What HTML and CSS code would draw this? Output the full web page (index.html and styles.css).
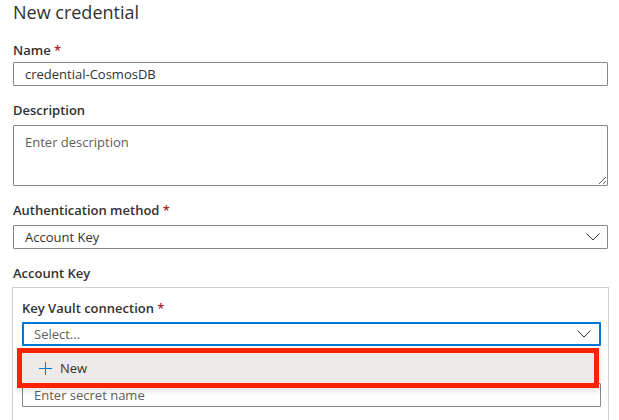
FILE: index.html
```html
<!DOCTYPE html>
<html lang="en">
<head>
<meta charset="utf-8">
<title>New credential</title>
<link rel="stylesheet" href="styles.css">
</head>
<body>
<div class="page">
  <h1 class="title">New credential</h1>

  <div class="field field-first">
    <label class="label">Name <span class="req">*</span></label>
    <input class="input" type="text" value="credential-CosmosDB">
  </div>

  <div class="field">
    <label class="label label-gap">Description</label>
    <textarea class="textarea" placeholder="Enter description"></textarea>
  </div>

  <div class="field">
    <label class="label label-gap">Authentication method <span class="req">*</span></label>
    <div class="select">
      <span class="select-text">Account Key</span>
      <svg class="chev" width="14" height="8" viewBox="0 0 14 8"><path d="M0.5 0.5 L7 7 L13.5 0.5" fill="none" stroke="#323130" stroke-width="1"/></svg>
    </div>
  </div>

  <div class="section-label">Account Key</div>
  <div class="group">
    <label class="label label-kv">Key Vault connection <span class="req">*</span></label>
    <div class="dd-wrap">
      <div class="select select-focus">
        <span class="select-text placeholder">Select...</span>
        <svg class="chev" width="14" height="8" viewBox="0 0 14 8"><path d="M0.5 0.5 L7 7 L13.5 0.5" fill="none" stroke="#323130" stroke-width="1"/></svg>
      </div>
      <div class="menu">
        <div class="menu-item">
          <svg class="plus" width="13" height="13" viewBox="0 0 13 13"><path d="M6.5 0 V13 M0 6.5 H13" fill="none" stroke="#0078d4" stroke-width="1"/></svg>
          <span>New</span>
        </div>
      </div>
    </div>
    <input class="input input-secret" type="text" placeholder="Enter secret name">
  </div>
</div>
</body>
</html>
```

FILE: styles.css
```css
* { box-sizing: border-box; }
html, body { margin: 0; padding: 0; background: #ffffff; }
body {
  font-family: "Open Sans", "Noto Sans", sans-serif;
  font-size: 13px;
  color: #323130;
}
.page {
  width: 619px;
  padding: 0 11px 0 13px;
}
.title {
  margin: 0;
  font-size: 18px;
  line-height: 24px;
  font-weight: 400;
  color: #323130;
}
.field { margin-top: 15px; }
.field-first { margin-top: 17px; }
.label {
  display: block;
  font-weight: 600;
  font-size: 13px;
  line-height: 18px;
  margin-bottom: 3px;
  color: #323130;
}
.label-gap { margin-bottom: 6px; }
.req { color: #a4262c; }
.input {
  display: block;
  width: 100%;
  height: 24px;
  border: 1px solid #8a8886;
  border-radius: 1px;
  padding: 0 11px;
  font-family: inherit;
  font-size: 13px;
  color: #323130;
  background: #fff;
  outline: none;
}
.input::placeholder { color: #605e5c; }
.textarea {
  display: block;
  width: 100%;
  height: 61px;
  border: 1px solid #8a8886;
  border-radius: 1px;
  padding: 7px 11px;
  font-family: inherit;
  font-size: 13px;
  line-height: 18px;
  color: #323130;
  resize: vertical;
  outline: none;
}
.textarea::placeholder { color: #605e5c; }
.select {
  display: flex;
  align-items: center;
  justify-content: space-between;
  height: 24px;
  border: 1px solid #8a8886;
  border-radius: 1px;
  padding: 0 7px 0 11px;
  background: #fff;
}
.select-text { line-height: 18px; }
.placeholder { color: #605e5c; }
.chev { display: block; }
.select-focus {
  border: 2px solid #0078d4;
  padding: 0 8px 0 10px;
}
.section-label {
  margin-top: 15px;
  font-weight: 600;
  line-height: 18px;
}
.group {
  margin-top: 5px;
  margin-left: -1px;
  width: 597px;
  border: 1px solid #d2d0ce;
  border-bottom: none;
  padding: 11px 7px 30px 9px;
}
.label-kv { margin-bottom: 5px; }
.dd-wrap { position: relative; }
.menu {
  position: absolute;
  left: -5px;
  top: calc(100% + 2px);
  width: 582px;
  height: 40px;
  border: 5px solid #ff2200;
  background: #edebe9;
  box-shadow: 0 3px 6px rgba(0,0,0,0.12);
  z-index: 2;
}
.menu-item {
  display: flex;
  align-items: center;
  height: 30px;
  padding-left: 17px;
  gap: 8px;
  color: #323130;
}
.plus { display: block; }
.input-secret { margin-top: 37px; }
```
